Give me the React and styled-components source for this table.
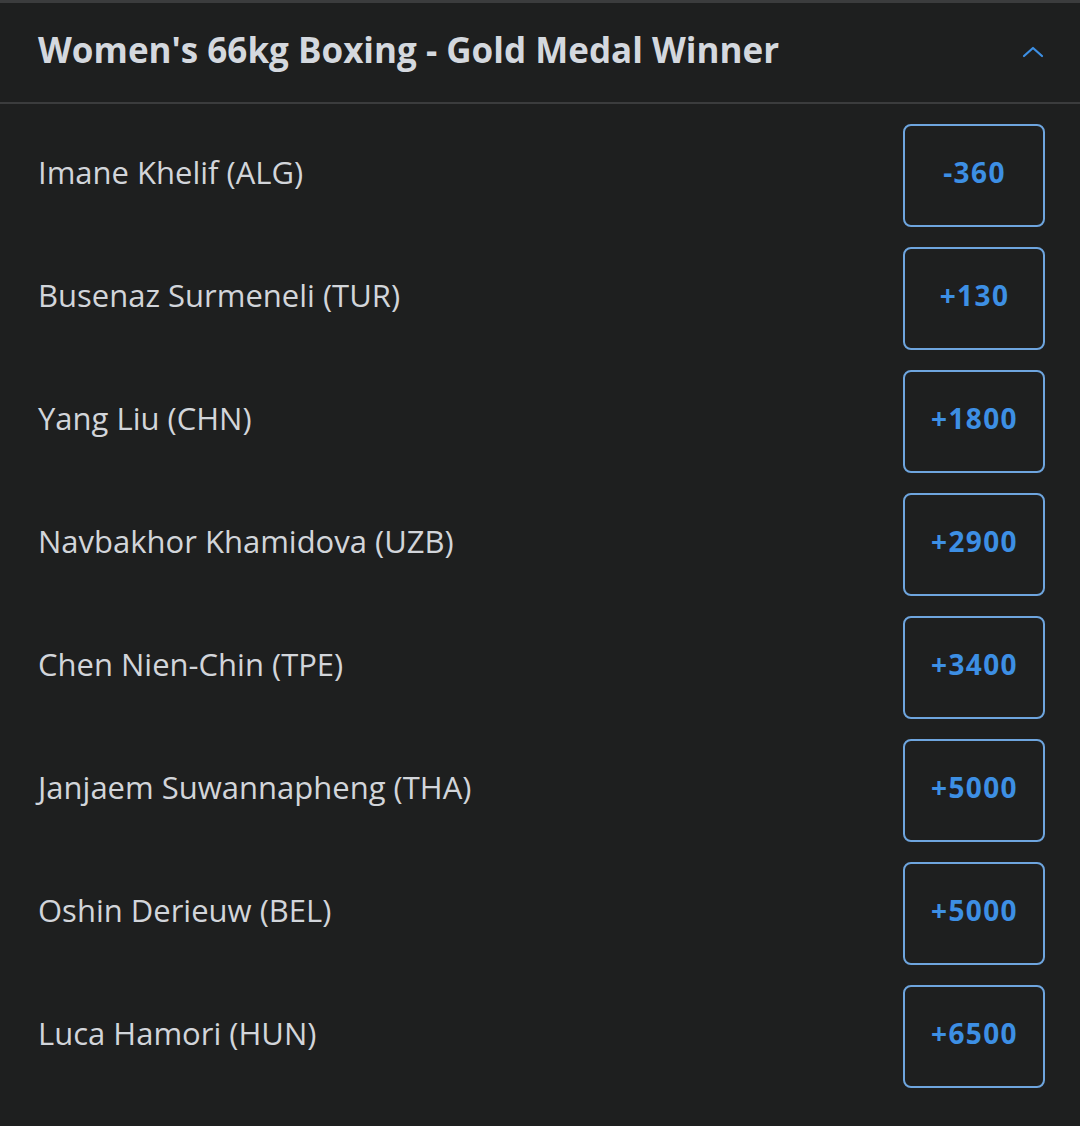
import React from 'react';
import styled, { createGlobalStyle } from 'styled-components';

const GlobalStyle = createGlobalStyle`
  html, body {
    margin: 0;
    padding: 0;
    background: #1e1f1f;
  }
  * {
    box-sizing: border-box;
  }
`;

const Panel = styled.div`
  width: 1080px;
  min-height: 1126px;
  background: #1e1f1f;
  border-top: 3px solid #3b3c3d;
  font-family: "Open Sans", "Noto Sans", sans-serif;
`;

const Header = styled.div`
  display: flex;
  align-items: center;
  justify-content: space-between;
  height: 101px;
  padding: 0 36px 0 38px;
  border-bottom: 2px solid #3b3c3d;
`;

const Title = styled.h1`
  margin: 0 0 7px;
  font-size: 35px;
  line-height: 1;
  font-weight: 700;
  color: #d4d8de;
`;

const Chevron = styled.svg`
  width: 22px;
  height: 14px;
  margin-bottom: 2px;
`;

const List = styled.div`
  display: flex;
  flex-direction: column;
  gap: 20px;
  padding: 20px 35px 40px 38px;
`;

const Row = styled.div`
  display: flex;
  align-items: center;
  justify-content: space-between;
  height: 103px;
`;

const Name = styled.span`
  font-size: 31px;
  line-height: 1;
  margin-bottom: 6px;
  color: #d2d5da;
`;

const OddsButton = styled.button`
  width: 142px;
  height: 103px;
  padding: 0 0 7px 1px;
  border: 2px solid #6ea5de;
  border-radius: 8px;
  background: transparent;
  color: #3d8fe4;
  font-family: "Open Sans", "Noto Sans", sans-serif;
  font-size: 28px;
  line-height: 1;
  letter-spacing: 1.4px;
  font-weight: 700;
  cursor: pointer;
`;

const runners = [
  ['Imane Khelif (ALG)', '-360'],
  ['Busenaz Surmeneli (TUR)', '+130'],
  ['Yang Liu (CHN)', '+1800'],
  ['Navbakhor Khamidova (UZB)', '+2900'],
  ['Chen Nien-Chin (TPE)', '+3400'],
  ['Janjaem Suwannapheng (THA)', '+5000'],
  ['Oshin Derieuw (BEL)', '+5000'],
  ['Luca Hamori (HUN)', '+6500'],
];

export default function App() {
  return (
    <>
      <GlobalStyle />
      <Panel>
        <Header>
          <Title>Women's 66kg Boxing - Gold Medal Winner</Title>
          <Chevron viewBox="0 0 22 14">
            <path d="M2 11 L11 3 L20 11" fill="none" stroke="#3d8fe4" strokeWidth="2.2" strokeLinecap="round" strokeLinejoin="round" />
          </Chevron>
        </Header>
        <List>
          {runners.map(([name, odds]) => (
            <Row key={name + odds}>
              <Name>{name}</Name>
              <OddsButton>{odds}</OddsButton>
            </Row>
          ))}
        </List>
      </Panel>
    </>
  );
}
